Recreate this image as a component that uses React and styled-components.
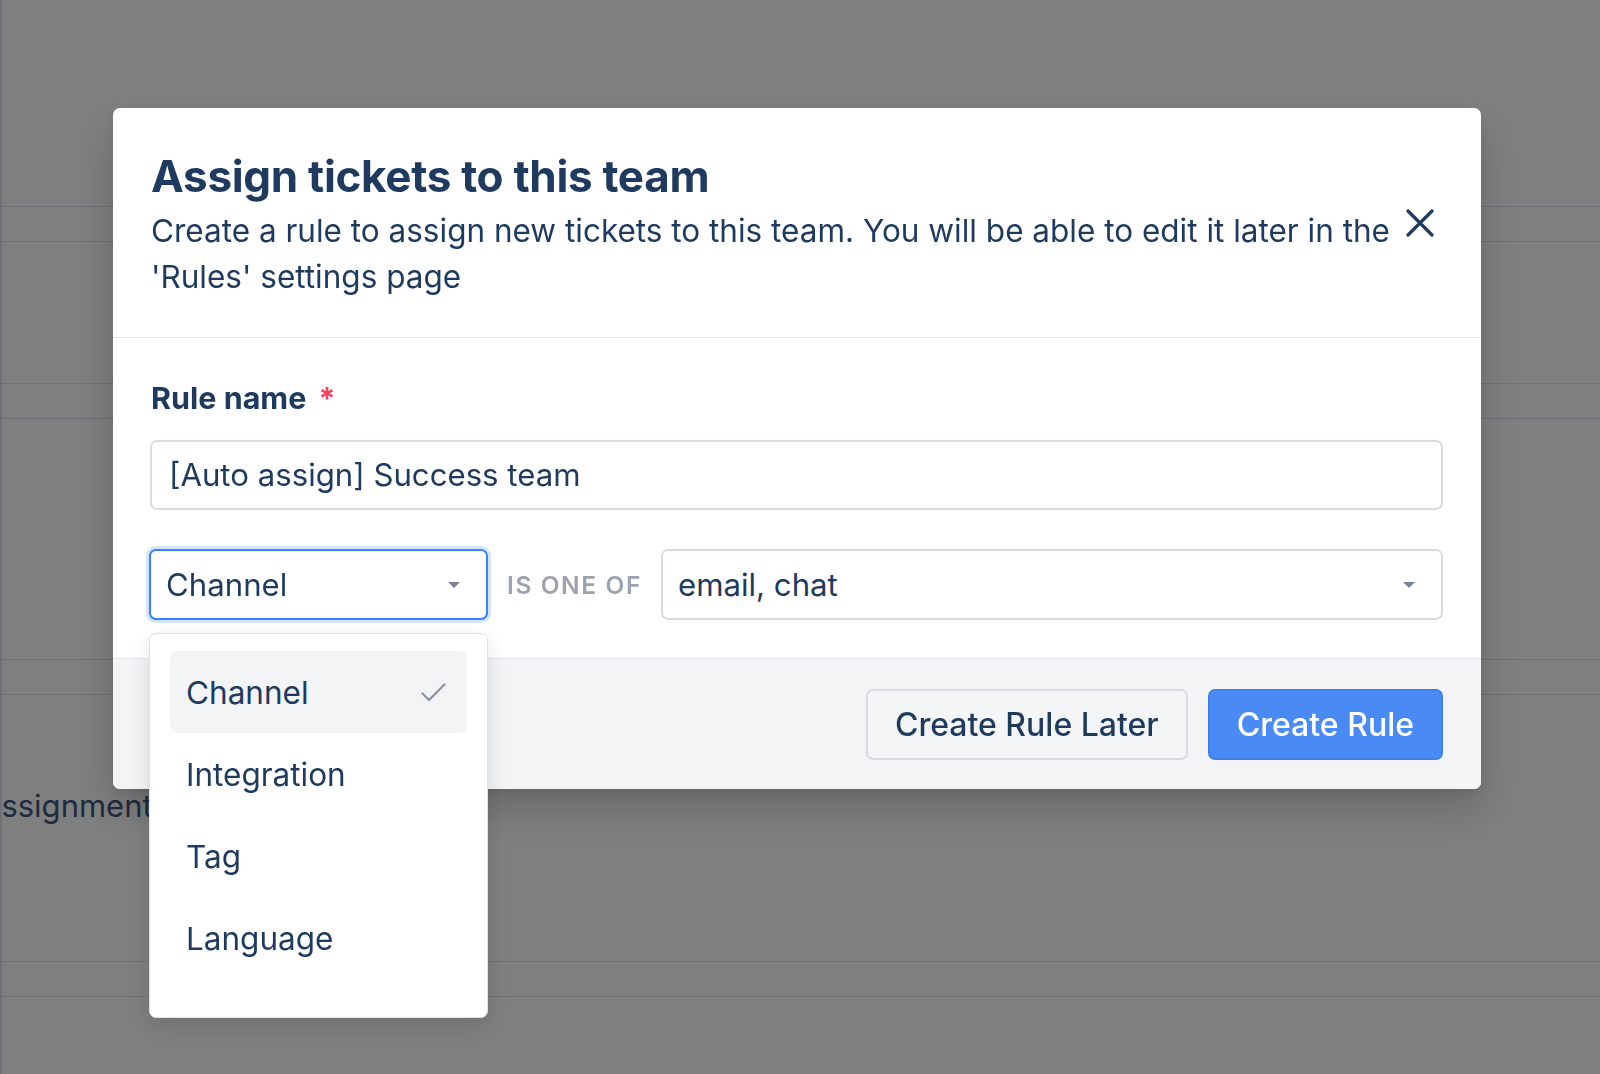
import React from 'react';
import styled, { createGlobalStyle } from 'styled-components';

const GlobalStyle = createGlobalStyle`
  html, body {
    margin: 0;
    padding: 0;
    background: #ffffff;
    font-family: Inter, "Noto Sans", sans-serif;
  }
  * { box-sizing: border-box; }
`;

const Page = styled.div`
  min-height: 100vh;
  background: #ffffff;
  border-left: 2px solid #dde2ea;
  overflow: hidden;
`;

const Band = styled.div`
  margin-top: ${(p) => p.$gap}px;
  height: 36px;
  border-top: 1px solid #dde2ec;
  border-bottom: 1px solid #dde2ec;
`;

const PageText = styled.div`
  margin-top: 88px;
  margin-left: -22px;
  font-size: 31px;
  line-height: 46px;
  color: #3f5680;
  white-space: nowrap;
`;

const Backdrop = styled.div`
  position: fixed;
  inset: 0;
  background: rgba(0, 0, 0, 0.5);
  padding: 108px 0 0 113px;
`;

const Modal = styled.div`
  position: relative;
  width: 1368px;
  background: #ffffff;
  border-radius: 7px;
  box-shadow: 0 20px 40px rgba(0, 0, 0, 0.18), 0 4px 10px rgba(0, 0, 0, 0.08);
  color: #1e3a5f;
`;

const Header = styled.div`
  display: flex;
  align-items: center;
  padding: 41px 38px 37px 38px;
  border-bottom: 1px solid #dfe3e8;
`;

const HeaderText = styled.div`
  flex: 1;
`;

const Title = styled.h2`
  margin: 0;
  font-size: 44px;
  line-height: 54px;
  font-weight: 700;
  letter-spacing: -0.3px;
`;

const Subtitle = styled.p`
  margin: 5px 0 0;
  font-size: 31.5px;
  line-height: 46px;
  font-weight: 400;
`;

const CloseButton = styled.button`
  width: 36px;
  height: 36px;
  margin: -4px 5px 0 10px;
  padding: 0;
  border: none;
  background: transparent;
  color: #1e3a5f;
  display: flex;
  align-items: center;
  justify-content: center;
  cursor: pointer;
`;

const Body = styled.div`
  padding: 37px 38px 38px 37px;
`;

const Label = styled.label`
  display: block;
  font-size: 30.5px;
  line-height: 46px;
  font-weight: 700;
  padding-left: 1px;

  span {
    color: #f43f5e;
    margin-left: 12px;
  }
`;

const TextInput = styled.div`
  margin-top: 19px;
  height: 70px;
  border: 2px solid #d8dce2;
  border-radius: 7px;
  display: flex;
  align-items: center;
  padding: 0 17px;
  font-size: 31.2px;
  color: #1e3a5f;
`;

const Row = styled.div`
  margin-top: 39px;
  display: flex;
  align-items: center;
  gap: 19px;
`;

const SelectWrap = styled.div`
  position: relative;
  width: ${(p) => (p.$grow ? 'auto' : '339px')};
  flex: ${(p) => (p.$grow ? 1 : 'none')};
  margin-left: ${(p) => (p.$grow ? 0 : -1)}px;
`;

const SelectBox = styled.div`
  height: 71px;
  border: 2px solid ${(p) => (p.$focused ? '#3b82f6' : '#d8dce2')};
  box-shadow: ${(p) => (p.$focused ? '0 0 0 3px rgba(59, 130, 246, 0.22)' : 'none')};
  border-radius: 7px;
  background: #ffffff;
  display: flex;
  align-items: center;
  justify-content: space-between;
  padding: 0 26px 0 15px;
  font-size: 31.2px;
  color: #1e3a5f;
`;

const Caret = styled.span`
  width: 0;
  height: 0;
  border-left: 6px solid transparent;
  border-right: 6px solid transparent;
  border-top: 6px solid #7b8494;
`;

const Operator = styled.div`
  font-size: 24.5px;
  font-weight: 600;
  letter-spacing: 1.6px;
  color: #9ca3af;
  white-space: nowrap;
`;

const Menu = styled.div`
  position: absolute;
  top: calc(100% + 13px);
  left: 0;
  width: 100%;
  background: #ffffff;
  border: 1px solid #dde1e6;
  border-radius: 7px;
  box-shadow: 0 8px 20px rgba(0, 0, 0, 0.12);
  padding: 17px 20px 38px;
  z-index: 2;
`;

const MenuItem = styled.div`
  height: 82px;
  display: flex;
  align-items: center;
  justify-content: space-between;
  padding: 0 21px 0 16px;
  border-radius: 8px;
  background: ${(p) => (p.$active ? '#f3f4f6' : 'transparent')};
  font-size: 31.5px;
  color: #1e3a5f;
`;

const Footer = styled.div`
  background: #f3f4f6;
  border-top: 1px solid #e2e5e9;
  border-radius: 0 0 7px 7px;
  padding: 30px 38px 29px;
  display: flex;
  justify-content: flex-end;
  gap: 20px;
`;

const Button = styled.button`
  height: 71px;
  padding: 0 27px;
  border-radius: 7px;
  font-family: Inter, "Noto Sans", sans-serif;
  font-size: 32px;
  font-weight: 500;
  cursor: pointer;
  border: 2px solid ${(p) => (p.$primary ? '#3f80ea' : '#d8dce2')};
  background: ${(p) => (p.$primary ? '#4a8af4' : '#f4f5f7')};
  color: ${(p) => (p.$primary ? '#ffffff' : '#1e3a5f')};
`;

const CloseIcon = () => (
  <svg width="28" height="28" viewBox="0 0 28 28" fill="none">
    <path d="M2 2L26 26M26 2L2 26" stroke="currentColor" strokeWidth="3.2" strokeLinecap="round" />
  </svg>
);

const CheckIcon = () => (
  <svg width="25" height="19" viewBox="0 0 25 19" fill="none">
    <path d="M1.5 10.5L8 17L23.5 1.5" stroke="#8a94a3" strokeWidth="2.2" strokeLinecap="round" strokeLinejoin="round" />
  </svg>
);

const options = ['Channel', 'Integration', 'Tag', 'Language'];

export default function App() {
  return (
    <>
      <GlobalStyle />
      <Page>
        <Band $gap={206} />
        <Band $gap={141} />
        <Band $gap={240} />
        <PageText>Assignment</PageText>
        <Band $gap={132} />
      </Page>
      <Backdrop>
        <Modal>
          <Header>
            <HeaderText>
              <Title>Assign tickets to this team</Title>
              <Subtitle>
                Create a rule to assign new tickets to this team. You will be able to edit it later in the 'Rules' settings page
              </Subtitle>
            </HeaderText>
            <CloseButton aria-label="Close">
              <CloseIcon />
            </CloseButton>
          </Header>
          <Body>
            <Label>
              Rule name<span>*</span>
            </Label>
            <TextInput>[Auto assign] Success team</TextInput>
            <Row>
              <SelectWrap>
                <SelectBox $focused>
                  Channel
                  <Caret />
                </SelectBox>
                <Menu>
                  {options.map((o, i) => (
                    <MenuItem key={o} $active={i === 0}>
                      {o}
                      {i === 0 && <CheckIcon />}
                    </MenuItem>
                  ))}
                </Menu>
              </SelectWrap>
              <Operator>IS ONE OF</Operator>
              <SelectWrap $grow>
                <SelectBox>
                  email, chat
                  <Caret />
                </SelectBox>
              </SelectWrap>
            </Row>
          </Body>
          <Footer>
            <Button>Create Rule Later</Button>
            <Button $primary>Create Rule</Button>
          </Footer>
        </Modal>
      </Backdrop>
    </>
  );
}
